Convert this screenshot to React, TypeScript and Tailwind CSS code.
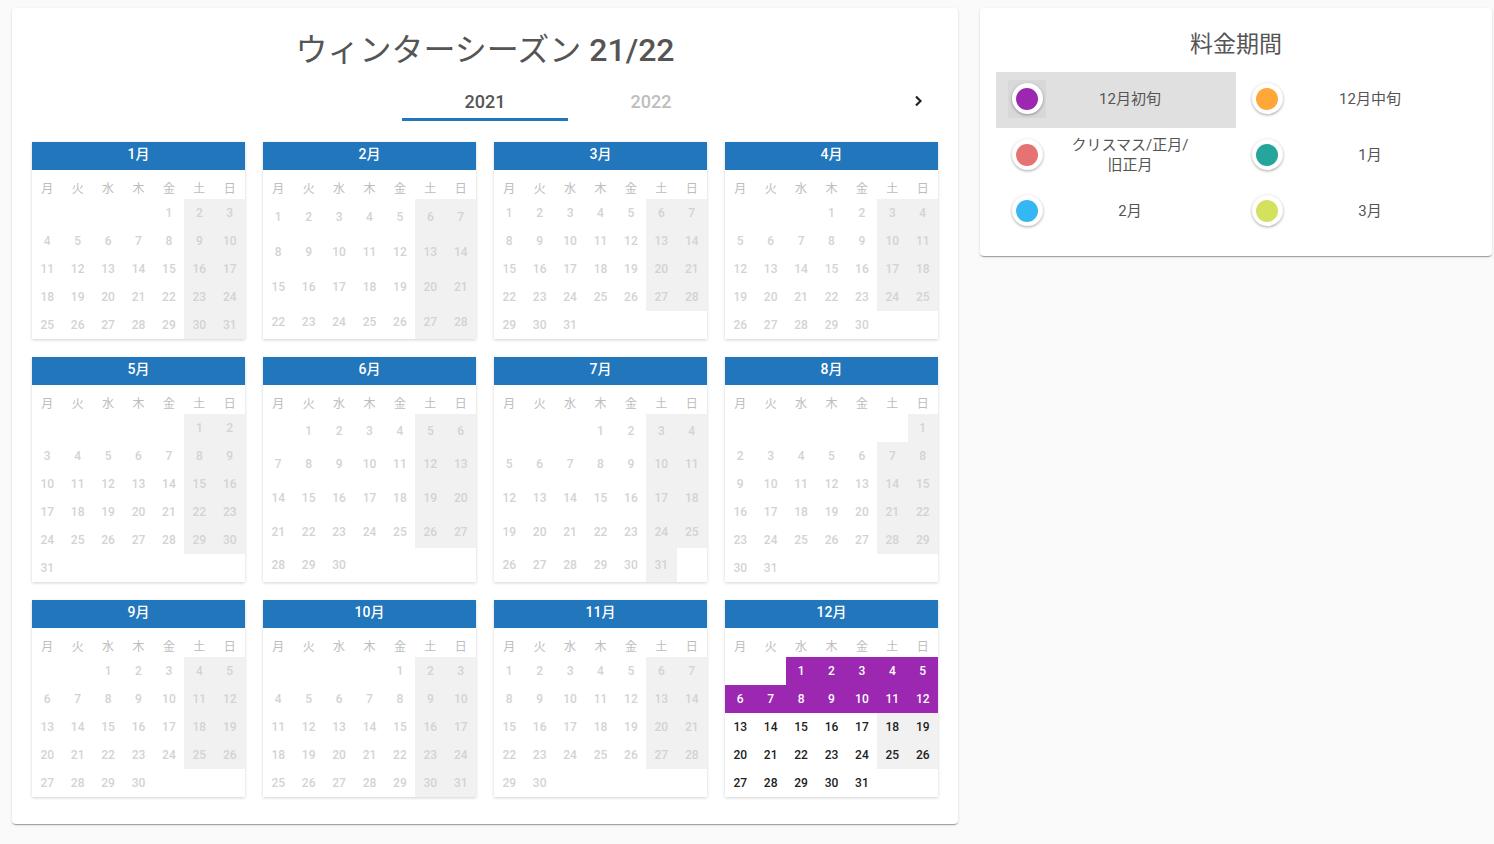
import React from "react";

const FONT = "font-['Roboto','Noto_Sans_CJK_JP',sans-serif]";
const DOW = ["月", "火", "水", "木", "金", "土", "日"];

function Month({ m }: { m: number }) {
  const offset = (new Date(2021, m - 1, 1).getDay() + 6) % 7;
  const days = new Date(2021, m, 0).getDate();
  const weeks = Math.ceil((offset + days) / 7);
  const isDec = m === 12;
  const rows: React.ReactNode[] = [];
  for (let w = 0; w < weeks; w++) {
    const cells: React.ReactNode[] = [];
    for (let c = 0; c < 7; c++) {
      const i = w * 7 + c;
      const d = i - offset + 1;
      const valid = d >= 1 && d <= days;
      let cls = "flex items-center justify-center text-[12px] font-medium";
      if (valid) {
        if (isDec && d <= 12) {
          cls += " bg-[#9c27b0] text-white font-bold";
        } else {
          cls += c >= 5 ? " bg-[#f1f1f1]" : "";
          cls += isDec ? " text-[#212121]" : " text-[#d3d3d3]";
        }
      }
      cells.push(
        <div key={c} className={cls}>
          {valid ? d : ""}
        </div>
      );
    }
    rows.push(
      <div key={w} className="flex-1 min-h-[28px] grid grid-cols-7">
        {cells}
      </div>
    );
  }
  return (
    <div className="flex flex-col bg-white shadow-[0_1px_3px_rgba(0,0,0,0.18)]">
      <div className="h-[28px] bg-[#2276bb] text-white text-[14px] font-medium flex items-center justify-center pb-[3px]">
        {m}月
      </div>
      <div className="h-[29px] grid grid-cols-7">
        {DOW.map((d) => (
          <div key={d} className="flex items-end justify-center pb-[3px] text-[12px] leading-[14px] text-[#bdbdbd]">
            {d}
          </div>
        ))}
      </div>
      <div className="flex-1 flex flex-col">{rows}</div>
    </div>
  );
}

const LEGEND = [
  { label: "12月初旬", color: "bg-[#9c27b0]", selected: true },
  { label: "12月中旬", color: "bg-[#ffa737]" },
  { label: "クリスマス/正月/\n旧正月", color: "bg-[#e57373]" },
  { label: "1月", color: "bg-[#26a69a]" },
  { label: "2月", color: "bg-[#35b7f4]" },
  { label: "3月", color: "bg-[#d4e15d]" },
];

function LegendItem({ label, color, selected }: { label: string; color: string; selected?: boolean }) {
  const lines = label.split("\n");
  return (
    <div className={`h-[56px] flex items-center pl-[12px] pb-[3px] ${selected ? "bg-[#e0e0e0]" : ""}`}>
      <div className={`w-[38px] h-[38px] flex items-center justify-center ${selected ? "bg-[#d8d8d8]" : ""}`}>
        <div className="w-[31px] h-[31px] rounded-full bg-white shadow-[0_1px_3px_rgba(0,0,0,0.35)] flex items-center justify-center">
          <div className={`w-[22px] h-[22px] rounded-full ${color}`} />
        </div>
      </div>
      <div className="flex-1 pr-[22px] text-center text-[15px] leading-[20px] text-[#555]">
        {lines.map((l, i) => (
          <div key={i}>{l}</div>
        ))}
      </div>
    </div>
  );
}

export default function App() {
  return (
    <div className={`min-h-[844px] bg-[#fafafa] flex items-start gap-[22px] pl-[12px] pt-[8px] ${FONT}`}>
      <div className="w-[946px] bg-white rounded-[4px] shadow-[0_2px_1px_-1px_rgba(0,0,0,0.2),0_1px_1px_0_rgba(0,0,0,0.14),0_1px_3px_0_rgba(0,0,0,0.12)] px-[20px] pt-[22px] pb-[27px]">
        <div className="h-[40px] flex items-center justify-center text-[32px] text-[#555] leading-[40px]">
          <span>ウィンターシーズン </span>
          <span className="font-medium ml-[8px]">21/22</span>
        </div>
        <div className="mt-[3px] h-[48px] flex">
          <div className="w-[370px]" />
          <div className="w-[166px] relative flex items-center justify-center pt-[8px] text-[18px] font-medium text-[#555]">
            2021
            <div className="absolute left-0 right-0 bottom-0 h-[3px] bg-[#2276bb]" />
          </div>
          <div className="w-[166px] flex items-center justify-center pt-[8px] text-[18px] font-medium text-[#bdbdbd]">
            2022
          </div>
          <div className="flex-1" />
          <div className="w-[40px] flex items-center justify-center pt-[8px]">
            <svg width="8" height="12" viewBox="0 0 8 12">
              <path d="M2 1.5 L6.5 6 L2 10.5" fill="none" stroke="#222" strokeWidth="2.2" />
            </svg>
          </div>
        </div>
        <div className="mt-[21px] grid grid-cols-4 gap-x-[18px] gap-y-[18px]">
          {Array.from({ length: 12 }, (_, i) => (
            <Month key={i} m={i + 1} />
          ))}
        </div>
      </div>
      <div className="w-[512px] bg-white rounded-[4px] shadow-[0_2px_1px_-1px_rgba(0,0,0,0.2),0_1px_1px_0_rgba(0,0,0,0.14),0_1px_3px_0_rgba(0,0,0,0.12)] px-[16px] pt-[16px] pb-[16px]">
        <div className="h-[42px] flex items-center justify-center text-[23px] text-[#555]">料金期間</div>
        <div className="mt-[6px] grid grid-cols-2">
          {LEGEND.map((l) => (
            <LegendItem key={l.label} {...l} />
          ))}
        </div>
      </div>
    </div>
  );
}
